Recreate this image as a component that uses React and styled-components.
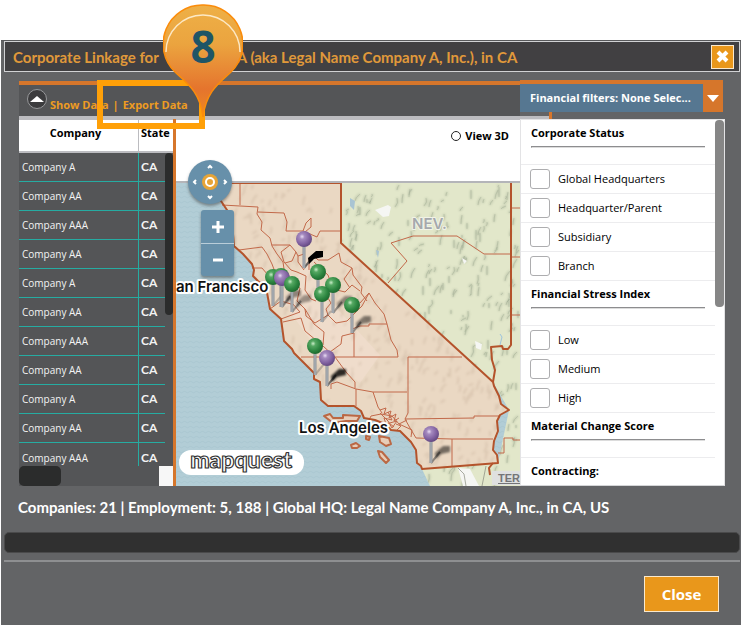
import React from "react";
import styled, { createGlobalStyle } from "styled-components";

const GlobalStyle = createGlobalStyle`
  *, *::before, *::after { box-sizing: border-box; }
  body { margin: 0; background: #fff; font-family: "Open Sans", sans-serif; }
  button, input { font: inherit; margin: 0; padding: 0; }
`;

const Page = styled.main`
  position: relative;
  padding: 40px 0 0 1px;
`;

const Dialog = styled.section`
  min-height: calc(100vh - 40px);
  background: #636466;
  border-top: 1px solid #58595b;
`;

const TitleBar = styled.header`
  display: flex;
  align-items: center;
  justify-content: space-between;
  height: 31px;
  margin: 0 1px 0 3px;
  padding: 0 5px 0 8px;
  background: #414042;
  border: 1px solid #d1d2d4;
`;

const Title = styled.h1`
  display: flex;
  gap: 78px;
  margin: 0;
  font: 700 15px/24px Lato, sans-serif;
  color: #e0993a;
  white-space: nowrap;
`;

const DismissButton = styled.button`
  display: grid;
  place-items: center;
  width: 23px;
  height: 24px;
  background: #e9971b;
  border: 1px solid #fbe9cc;
`;

const Workspace = styled.div`
  padding: 8px 16px 0 18px;
`;

const TopRow = styled.div`
  display: grid;
  grid-template-columns: minmax(0, 1fr) 205px;
  height: 39px;
`;

const Toolbar = styled.div`
  display: flex;
  align-items: flex-start;
  gap: 3px;
  margin-top: 1px;
  padding: 4px 0 0 8px;
  background: #545557;
  border-top: 4px solid #d6762b;
  border-bottom: 3px solid #bcbcc0;
`;

const RoundButton = styled.button`
  display: grid;
  place-items: center;
  width: 20px;
  height: 20px;
  border: 1px solid #97989a;
  border-radius: 50%;
  background: #3c3c3e;
`;

const Actions = styled.div`
  display: flex;
  gap: 4px;
  margin-top: 8px;
  font: 700 11px/16px "Open Sans", sans-serif;
  color: #ee9c22;
`;

const ActionButton = styled.button`
  border: 0;
  background: none;
  color: inherit;
`;

const FilterToggle = styled.button`
  display: flex;
  width: 203px;
  height: 32px;
  padding: 0;
  border: 0;
  background: #d6762b;
  color: #fff;
  font: 700 11px/28px "Open Sans", sans-serif;
`;

const FilterValue = styled.span`
  flex: 1;
  margin-top: 4px;
  padding-left: 10px;
  background: #567791;
  text-align: left;
  white-space: nowrap;
`;

const FilterArrow = styled.span`
  display: grid;
  place-items: center;
  width: 20px;
  height: 36px;
`;

const StripEnd = styled.div`
  display: flex;
  align-items: flex-end;
  width: 32px;
  height: 7px;
  border-right: 3px solid #d6762b;
  &::before {
    content: "";
    flex: 1;
    height: 3px;
    background: #bcbcc0;
  }
`;

const Panels = styled.div`
  display: grid;
  grid-template-columns: 154px minmax(0, 1fr) 205px;
  height: 367px;
`;

const DataPane = styled.div`
  display: flex;
  flex-direction: column;
  background: #545557;
`;

const DataBody = styled.div`
  position: relative;
  height: 347px;
  overflow: hidden;
`;

const DataTable = styled.table`
  width: 100%;
  table-layout: fixed;
  border-collapse: separate;
  border-spacing: 0;
`;

const HeadCell = styled.th`
  width: ${(p) => p.$width || "auto"};
  height: 34px;
  padding: ${(p) => (p.$center ? "0 6px 6px 0" : "0 0 6px 2px")};
  text-align: ${(p) => (p.$center ? "center" : "left")};
  background: #fff;
  border-top: 1px solid #bcbcc0;
  border-bottom: 2px solid #bcbcc0;
  border-right: ${(p) => (p.$center ? "1px solid #bcbcc0" : "0")};
  font: 700 11px/16px "Open Sans", sans-serif;
  color: #000;
`;

const Cell = styled.td`
  height: 29px;
  padding: 0 0 0 ${(p) => (p.$code ? 2 : 3)}px;
  border-bottom: ${(p) => (p.$last ? "0" : "1px solid #26aca2")};
  border-right: ${(p) => (p.$code ? "0" : "1px solid #26aca2")};
  color: #f3f3f3;
  font: ${(p) => (p.$code ? '700 12px/14px Lato' : '400 10px/14px "Open Sans"')}, sans-serif;
`;

const TableScroll = styled.div`
  position: absolute;
  top: 34px;
  right: 0;
  bottom: 0;
  width: 8px;
  background: #545557;
  &::before {
    content: "";
    display: block;
    height: 162px;
    border-radius: 4px;
    background: #2b2c2c;
  }
`;

const HorizontalScroll = styled.div`
  display: flex;
  justify-content: space-between;
  height: 20px;
  &::before {
    content: "";
    width: 42px;
    border-radius: 5px;
    background: #2b2c2c;
  }
  &::after {
    content: "";
    width: 14px;
    background: #f7f7f7;
  }
`;

const MapPane = styled.div`
  position: relative;
  display: flex;
  flex-direction: column;
  border-left: 3px solid #d6762b;
  background: #b2cdd6;
  overflow: hidden;
`;

const ViewBar = styled.div`
  display: flex;
  align-items: flex-start;
  justify-content: flex-end;
  height: 64px;
  padding: 8px 11px 0 0;
  background: #fff;
  border-top: 1px solid #bcbcc0;
  border-bottom: 2px solid #b4b5b9;
`;

const ViewOption = styled.label`
  display: flex;
  align-items: center;
  gap: 4px;
  font: 700 11px/16px "Open Sans", sans-serif;
  color: #000;
`;

const Radio = styled.input`
  appearance: none;
  width: 10px;
  height: 10px;
  border: 1px solid #222;
  border-radius: 50%;
  background: #fff;
`;

const MapDrawing = styled.svg`
  display: block;
  width: 100%;
  flex: 1;
  min-height: 0;
`;

const Compass = styled.div`
  position: absolute;
  top: 41px;
  left: 12px;
  width: 44px;
  height: 44px;
  border-radius: 50%;
  background: #6790aa;
  box-shadow: 0 2px 3px rgba(60, 60, 60, 0.5);
`;

const ZoomControl = styled.div`
  position: absolute;
  top: 91px;
  left: 25px;
  display: grid;
  width: 33px;
  border-radius: 3px;
  background: #6790aa;
  box-shadow: 0 2px 3px rgba(60, 60, 60, 0.5);
`;

const ZoomButton = styled.button`
  display: grid;
  place-items: center;
  height: 33px;
  border: 0;
  background: none;
  & + & { border-top: 1px solid #b9cdd9; }
`;

const MapLogo = styled.svg`
  position: absolute;
  left: 3px;
  bottom: 11px;
`;

const TermsLink = styled.a`
  position: absolute;
  right: 0;
  bottom: 1px;
  padding: 0 0 0 6px;
  background: #dfe0e0;
  color: #747577;
  font: 700 11px/14px "Liberation Sans", sans-serif;
`;

const FilterPanel = styled.div`
  display: flex;
  background: #fff;
  border: 1px solid #e3e3e5;
  border-bottom-color: #d4d5d7;
  overflow: hidden;
`;

const FilterList = styled.div`
  flex: 1;
`;

const FilterGroup = styled.fieldset`
  display: block;
  margin: 0;
  padding: 0;
  border: 0;
`;

const GroupTitle = styled.legend`
  display: block;
  width: 100%;
  height: ${(p) => (p.$open ? 44 : 29)}px;
  padding: 5px 10px 0 10px;
  font: 700 11px/16px "Open Sans", sans-serif;
  color: #000;
  &::after {
    content: "";
    display: ${(p) => (p.$open ? "block" : "none")};
    height: 2px;
    margin-top: 5px;
    border-top: 1px solid #8d8d8f;
    border-left: 1px solid #8d8d8f;
    border-bottom: 1px solid #dcdcdc;
  }
`;

const Option = styled.label`
  display: flex;
  align-items: center;
  gap: 8px;
  height: 29px;
  padding-left: 9px;
  border-top: 1px solid #ececee;
  font: 400 11px/16px "Open Sans", sans-serif;
  color: #000;
`;

const Divider = styled.div`
  height: 1px;
  background: #ececee;
`;

const CheckBox = styled.input`
  appearance: none;
  width: 20px;
  height: 20px;
  border: 1px solid #adadaf;
  border-radius: 3px;
  background: #fff;
`;

const FilterScroll = styled.div`
  width: 9px;
  &::before {
    content: "";
    display: block;
    height: 187px;
    border-radius: 4px;
    background: #868686;
  }
`;

const Summary = styled.p`
  margin: 0;
  padding: 11px 16px 14px 17px;
  font: 700 15px/20px Lato, sans-serif;
  color: #fff;
`;

const StatusBar = styled.div`
  height: 21px;
  margin: 1px 1px 7px 3px;
  border: 1px solid #4a4a4b;
  border-radius: 5px;
  background: #303030;
`;

const Footer = styled.footer`
  display: flex;
  justify-content: flex-end;
  margin: 0 1px 0 3px;
  padding: 14px 21px 13px 0;
  border-top: 2px solid #8e8f91;
`;

const CloseButton = styled.button`
  width: 75px;
  height: 36px;
  border: 1px solid #fbe9cc;
  background: #e9971b;
  color: #fff;
  font: 700 15px/20px "Open Sans", sans-serif;
`;

const Highlight = styled.div`
  position: absolute;
  left: 97px;
  top: 80px;
  width: 108px;
  height: 49px;
  border: 6px solid #ffa008;
  pointer-events: none;
`;

const Callout = styled.div`
  position: absolute;
  left: 163px;
  top: 4px;
  width: 80px;
  height: 114px;
  color: #1f5566;
  font: 700 44px/84px "Open Sans", sans-serif;
  text-align: center;
`;

const CalloutShape = styled.svg`
  position: absolute;
  inset: 0;
`;

const CalloutNumber = styled.span`
  position: relative;
`;

const companies = ["A", "AA", "AAA", "AA", "A", "AA", "AAA", "AA", "A", "AA", "AAA"];

const filterGroups = [
  { title: "Corporate Status", options: ["Global Headquarters", "Headquarter/Parent", "Subsidiary", "Branch"] },
  { title: "Financial Stress Index", options: ["Low", "Medium", "High"] },
  { title: "Material Change Score", options: [] },
];

const CALIFORNIA =
  "M219 183 L217 192 L221 201 L227 210 L232 222 L234 246 L243 254 L252 264 L254 270 L253 276 L258 281 L266 287 L268 298 L270 309 L281 319 L284 341 L292 349 L294 353 L302 361 L314 373 L314 379 L320 382 L321 400 L328 406 L354 406 L361 411 L364 418 L375 420 L385 424 L391 430 L400 431 L411 442 L416 450 L417 463 L421 466 L422 469 L498 463 L497 455 L493 450 L494 441 L498 431 L497 421 L500 415 L509 410 L501 404 L499 396 L494 386 L493 382 L341 243 L341 183 Z";

const COUNTIES = [
  "M240 183 V205 M222 205 L258 207 L257 214 L262 222 L261 230 L270 238 L272 246 L277 254 L283 262 L284 269",
  "M258 212 L284 213 L287 222 L286 231 L303 231 L306 223 L311 218 L311 227 L305 232 M303 231 L317 237 L320 231 L341 231",
  "M239 250 L262 247 L267 254 L272 264 L275 272 M272 245 L290 245 L296 252 L298 256 L304 254 M290 245 L281 252 L284 262 L291 270 L297 272",
  "M252 268 L262 268 L268 275 L276 276 M296 252 L292 261 L285 263 M304 270 L298 262 L298 256",
  "M314 256 L318 260 L328 260 L339 253 L341 262 L352 268 L353 275 L362 287 L361 293 L367 301",
  "M309 258 L309 270 M314 262 L328 275 L333 289 L345 292 L352 285 L360 291 M352 268 L344 279 L350 288",
  "M297 272 L306 276 L305 290 L311 299 L316 301 M291 283 L300 288 L297 301 L305 309 M281 319 L300 312 L292 303 L290 296",
  "M270 309 L281 301 L291 304 M283 322 L301 318 L305 331 L323 346 L335 357 M305 309 L314 324 L324 332 L323 345",
  "M305 309 L306 316 L315 323 L328 315 L326 309 L331 303 L326 295 M328 315 L336 323 L347 321 L353 315",
  "M353 315 L362 306 L369 293 L375 303 L384 314 L387 324 M369 293 L360 303 M352 329 L360 326 L369 326 V324 H387",
  "M301 357 H398 L397 350 L391 340 L387 324 M354 333 V357 M354 333 L342 336 L341 344 L330 352 M335 357 L346 372 L355 382 V388",
  "M331 389 L331 384 L337 382 L356 389 L373 392 H407 M356 389 V406 M373 392 L378 407 L382 413",
  "M462 357 H408 V413 L405 419 L474 418 V416 H500 M405 419 L410 428 L416 438 L452 439 H493 M452 439 V466",
  "M370 418 L371 416 L381 414 L392 416 L399 424 L407 420 M399 424 L412 430 L411 437",
];

const LA_DETAIL =
  "M380 410 L386 408 L384 414 L391 411 L389 418 L396 414 L394 421 L399 418 M380 413 L388 421 L392 428 L397 421 L386 424 L384 418 L392 420 L388 412 M396 424 L401 426 L397 430 M389 423 L394 427";

const NEVADA_LINES =
  "M388 283 L407 261 L391 243 L413 236 H457 L484 254 H512 M512 208 H522 M512 257 H522 M512 315 H522 M498 453 H504 V438 H513 V440 H522";

const EAST_BORDER = "M511 183 V345 L508 349 L503 349 L502 346 L491 347 L492 360 L495 370 L493 382";

const ISLANDS = [
  "M324 416 L330 414 L333 418 L343 418 V415 L360 416 L357 421 L346 421 L333 423 Z",
  "M351 445 L356 443 L360 446 L357 448 L352 448 Z",
  "M366 436 L370 437 L369 440 L366 439 Z",
  "M379 436 L389 438 L391 444 L386 446 L380 442 Z",
  "M378 451 L382 452 L389 460 L386 463 L380 457 Z",
];

const PINS = [
  [304, 239, 268, "p", 1],
  [273, 277, 306, "g", 0],
  [281, 276, 307, "g", 0],
  [282, 278, 307, "p", 0.4],
  [292, 284, 312, "g", 0.35],
  [318, 272, 300, "g", 0],
  [333, 285, 313, "g", 0.4],
  [322, 294, 322, "g", 0],
  [352, 305, 333, "g", 0.45],
  [315, 346, 375, "g", 0],
  [327, 358, 386, "p", 0.8],
  [431, 434, 463, "p", 0.5],
];

function reliefMarks() {
  let seed = 7;
  const next = () => {
    seed = (seed * 16807) % 2147483647;
    return seed / 2147483647;
  };
  return Array.from({ length: 620 }, () => {
    const x = Math.round(225 + next() * 295);
    const y = Math.round(184 + next() * 300);
    const length = Math.round(2 + next() * 8);
    const lean = Math.round(next() * 7 - 5);
    return `M${x} ${y} q${lean} ${Math.round(length / 2)} ${-Math.abs(lean)} ${length}`;
  });
}

const RELIEF = reliefMarks().join(" ");

function Pin({ x, y, foot, tone, shade }) {
  return (
    <g>
      <path d={`M${x} ${foot} L${x + 9} ${foot - 11}`} stroke="#444" strokeWidth="2" opacity={0.3 + shade * 0.5} />
      {shade > 0 && (
        <path
          d={`M${x + 4} ${foot - 10} l8 -7 h7 v6 l-9 2 -5 5z`}
          fill="#000"
          opacity={shade}
          filter={shade < 1 ? "url(#soft)" : undefined}
        />
      )}
      <path d={`M${x} ${y} V${foot}`} stroke="#8a9096" strokeWidth="3" />
      <path d={`M${x} ${y} V${foot}`} stroke="#b6bbc0" strokeWidth="1" />
      <circle cx={x} cy={y} r="8" fill={tone === "p" ? "url(#purple)" : "url(#green)"} />
    </g>
  );
}

function CaliforniaMap() {
  return (
    <MapDrawing viewBox="176 183 344 303" preserveAspectRatio="xMinYMin slice" role="img" aria-label="Map of California">
      <defs>
        <radialGradient id="green" cx="0.38" cy="0.35" r="0.65">
          <stop offset="0" stopColor="#c9ecc9" />
          <stop offset="0.25" stopColor="#55a862" />
          <stop offset="0.7" stopColor="#2c8540" />
          <stop offset="1" stopColor="#1f6b30" />
        </radialGradient>
        <radialGradient id="purple" cx="0.38" cy="0.35" r="0.65">
          <stop offset="0" stopColor="#e9dcf4" />
          <stop offset="0.25" stopColor="#a58abf" />
          <stop offset="0.7" stopColor="#8162a1" />
          <stop offset="1" stopColor="#654a83" />
        </radialGradient>
        <filter id="soft">
          <feGaussianBlur stdDeviation="1" />
        </filter>
        <pattern id="waves" width="6" height="5" patternUnits="userSpaceOnUse">
          <rect width="6" height="5" fill="#b2cdd6" />
          <path d="M0 2 q1.500 1.500 3 0 t3 0" fill="none" stroke="#a8c5cf" strokeWidth="0.8" />
        </pattern>
        <clipPath id="state">
          <path d={CALIFORNIA} />
        </clipPath>
        <clipPath id="east">
          <path d="M341 183 H522 V486 H430 L422 469 L498 463 L509 410 L493 382 L341 243 Z" />
        </clipPath>
      </defs>
      <rect x="176" y="183" width="700" height="303" fill="url(#waves)" />
      <path d="M341 183 H876 V486 H430 L422 469 L498 463 L509 410 L493 382 L341 243 Z" fill="#e2e7ca" />
      <g clipPath="url(#east)">
        <path d={RELIEF} fill="none" stroke="#8f9b83" strokeWidth="2" opacity="0.4" filter="url(#soft)" />
        <path d={RELIEF} fill="none" stroke="#8f9b83" strokeWidth="1" opacity="0.3" />
      </g>
      <path d="M375 210 l13 -5 3 2 -2 9 -6 1z M475 341 l7 3 -1 6 -5 -2z M462 258 l5 3 -3 3z M458 468 l12 1 9 17 h-16z" fill="#f5f6f3" />
      <path d="M350 198 l5 3 -1 9 -4 -4z M376 250 l3 1 -1 7z" fill="#a9c4d3" />
      <path d="M500 334 l2 3 -2 8" fill="none" stroke="#9dc4de" />
      <path d={CALIFORNIA} fill="#ead8c3" />
      <g clipPath="url(#state)">
        <path d="M281 300 L296 285 L304 255 L320 290 L380 355 L360 383 L318 350 Z" fill="#efdccb" />
        <path d={RELIEF} fill="none" stroke="#c4ad98" strokeWidth="2" opacity="0.35" filter="url(#soft)" />
      </g>
      <g fill="none" stroke="#c2694a" strokeWidth="1" strokeLinejoin="round">
        {COUNTIES.map((d) => <path key={d} d={d} />)}
        <path d={LA_DETAIL} />
        <path d={NEVADA_LINES} />
      </g>
      <path d="M458 468 L464 474 L466 486 M486 466 L482 486" fill="none" stroke="#87897c" strokeWidth="0.700" />
      <path d="M493 463 L489 468 L490 475" fill="none" stroke="#b5552d" strokeWidth="2" />
      <path d={CALIFORNIA} fill="none" stroke="#b4532b" strokeWidth="2" strokeLinejoin="round" />
      <path d={EAST_BORDER} fill="none" stroke="#b4532b" strokeWidth="2" strokeLinejoin="round" />
      {ISLANDS.map((d) => <path key={d} d={d} fill="#e7cdb8" stroke="#bb6844" strokeWidth="2" strokeLinejoin="round" />)}
      <g fontFamily="Inter, sans-serif" fontWeight="600" strokeLinejoin="round" paintOrder="stroke">
        <text x="412" y="229" fontSize="15" fill="#a5a8ac" stroke="#f1f3e8" strokeWidth="2">NEV.</text>
        <g fontSize="15" fill="#111" stroke="#fff" strokeWidth="4">
          <text x="176" y="292">an Francisco</text>
          <text x="299" y="433">Los Angeles</text>
        </g>
      </g>
      {PINS.map(([x, y, foot, tone, shade]) => (
        <Pin key={`${x}-${y}`} x={x} y={y} foot={foot} tone={tone} shade={shade} />
      ))}
    </MapDrawing>
  );
}

export default function App() {
  return (
    <Page>
      <GlobalStyle />
      <Dialog role="dialog" aria-labelledby="dialog-title">
        <TitleBar>
          <Title id="dialog-title">
            <span>Corporate Linkage for</span>
            <span>A (aka Legal Name Company A, Inc.), in CA</span>
          </Title>
          <DismissButton type="button" aria-label="Dismiss">
            <svg width="13" height="13" viewBox="0 0 13 13">
              <path d="M2 2 L11 11 M11 2 L2 11" stroke="#fff" strokeWidth="4" />
            </svg>
          </DismissButton>
        </TitleBar>

        <Workspace>
          <TopRow>
            <Toolbar>
              <RoundButton type="button" aria-label="Collapse">
                <svg width="14" height="7" viewBox="0 0 14 7">
                  <path d="M7 0 L14 6 H0 Z" fill="#fff" />
                </svg>
              </RoundButton>
              <Actions>
                <ActionButton type="button">Show Data</ActionButton>
                <span>|</span>
                <ActionButton type="button">Export Data</ActionButton>
              </Actions>
            </Toolbar>
            <div>
              <FilterToggle type="button" aria-expanded="true">
                <FilterValue>Financial filters: None Selec...</FilterValue>
                <FilterArrow>
                  <svg width="12" height="7" viewBox="0 0 12 7">
                    <path d="M0 0 H12 L6 7 Z" fill="#fff" />
                  </svg>
                </FilterArrow>
              </FilterToggle>
              <StripEnd />
            </div>
          </TopRow>

          <Panels>
            <DataPane>
              <DataBody>
                <DataTable>
                  <thead>
                    <tr>
                      <HeadCell $center $width="120px">Company</HeadCell>
                      <HeadCell>State</HeadCell>
                    </tr>
                  </thead>
                  <tbody>
                    {companies.map((suffix, i) => (
                      <tr key={i}>
                        <Cell $last={i === companies.length - 1}>Company {suffix}</Cell>
                        <Cell $code $last={i === companies.length - 1}>CA</Cell>
                      </tr>
                    ))}
                  </tbody>
                </DataTable>
                <TableScroll />
              </DataBody>
              <HorizontalScroll />
            </DataPane>

            <MapPane>
              <ViewBar>
                <ViewOption>
                  <Radio type="radio" name="view" />
                  View 3D
                </ViewOption>
              </ViewBar>
              <CaliforniaMap />
              <Compass>
                <svg width="44" height="44" viewBox="0 0 44 44">
                  <circle cx="22" cy="22" r="8" fill="#e6a437" />
                  <circle cx="22" cy="22" r="4" fill="#e6a437" stroke="#fff" strokeWidth="2" />
                  <path
                    d="M20 8 L22 6 L24 8 M20 36 L22 38 L24 36 M8 20 L6 22 L8 24 M36 20 L38 22 L36 24"
                    fill="none"
                    stroke="#fff"
                    strokeWidth="2"
                  />
                </svg>
              </Compass>
              <ZoomControl>
                <ZoomButton type="button" aria-label="Zoom in">
                  <svg width="14" height="14" viewBox="0 0 14 14">
                    <path d="M7 1 V13 M1 7 H13" stroke="#fff" strokeWidth="3" />
                  </svg>
                </ZoomButton>
                <ZoomButton type="button" aria-label="Zoom out">
                  <svg width="14" height="14" viewBox="0 0 14 14">
                    <path d="M2 7 H12" stroke="#fff" strokeWidth="3" />
                  </svg>
                </ZoomButton>
              </ZoomControl>
              <MapLogo width="125" height="25" viewBox="0 0 125 25">
                <rect width="125" height="25" rx="12" fill="#fff" />
                <text
                  x="62"
                  y="18"
                  textAnchor="middle"
                  fontFamily="Lato, sans-serif"
                  fontWeight="900"
                  fontSize="23"
                  fill="#fff"
                  stroke="#333"
                  strokeWidth="1.200"
                >
                  mapquest
                </text>
              </MapLogo>
              <TermsLink href="#terms">TER</TermsLink>
            </MapPane>

            <FilterPanel>
              <FilterList>
                {filterGroups.map((group) => (
                  <FilterGroup key={group.title}>
                    <GroupTitle $open>{group.title}</GroupTitle>
                    {group.options.map((option) => (
                      <Option key={option}>
                        <CheckBox type="checkbox" />
                        {option}
                      </Option>
                    ))}
                    <Divider />
                  </FilterGroup>
                ))}
                <FilterGroup>
                  <GroupTitle>Contracting:</GroupTitle>
                </FilterGroup>
              </FilterList>
              <FilterScroll />
            </FilterPanel>
          </Panels>
        </Workspace>

        <Summary>Companies: 21 | Employment: 5, 188 | Global HQ: Legal Name Company A, Inc., in CA, US</Summary>
        <StatusBar />
        <Footer>
          <CloseButton type="button">Close</CloseButton>
        </Footer>
      </Dialog>

      <Highlight />
      <Callout>
        <CalloutShape width="80" height="114" viewBox="0 0 80 114">
          <defs>
            <linearGradient id="balloon" x1="0" y1="0" x2="0" y2="1">
              <stop offset="0" stopColor="#eeb047" />
              <stop offset="0.35" stopColor="#eba43f" />
              <stop offset="0.75" stopColor="#e5742d" />
              <stop offset="1" stopColor="#ee8a22" />
            </linearGradient>
          </defs>
          <path
            d="M40 1 A39 39 0 0 1 68 68 C56 79 43 88 40 113 C37 88 24 79 12 68 A39 39 0 0 1 40 1 Z"
            fill="url(#balloon)"
            stroke="#fb8c0b"
            strokeWidth="1.500"
          />
          <path d="M3 48 A37 37 0 1 1 77 48" fill="none" stroke="#fff3dc" strokeWidth="1.500" opacity="0.85" />
        </CalloutShape>
        <CalloutNumber>8</CalloutNumber>
      </Callout>
    </Page>
  );
}
